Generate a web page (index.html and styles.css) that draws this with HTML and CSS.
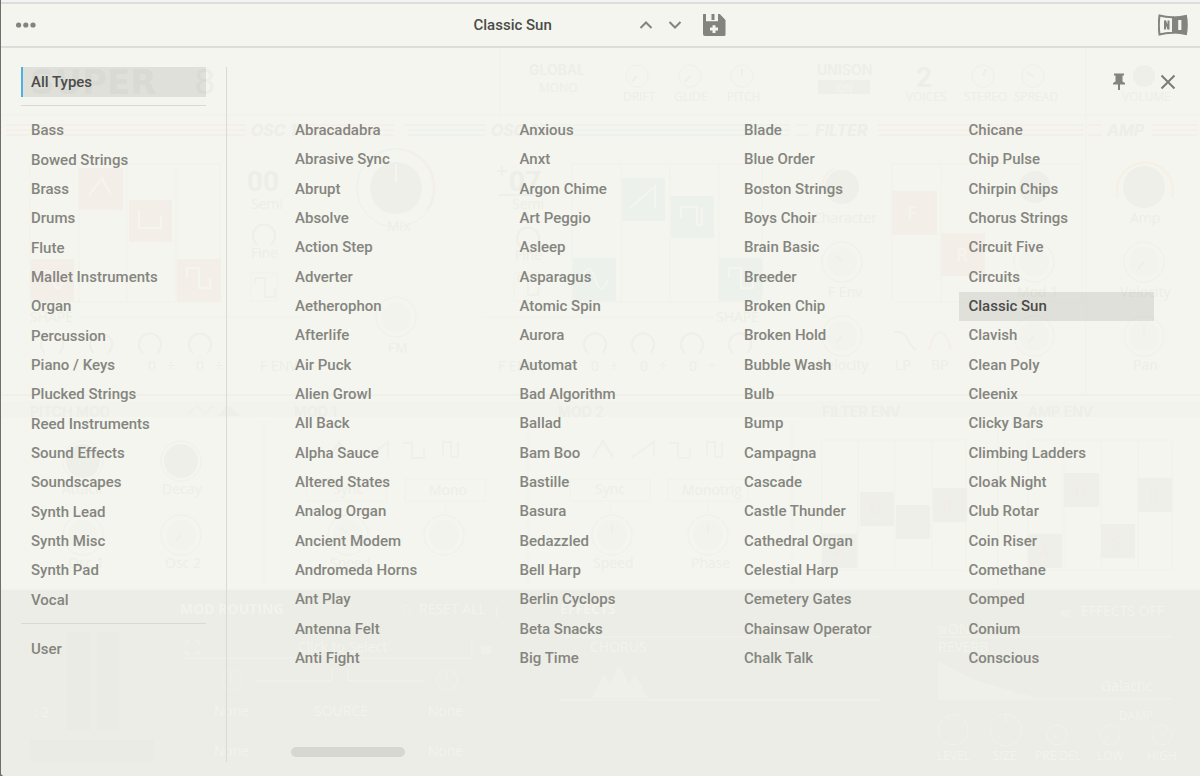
FILE: index.html
```html
<!DOCTYPE html>
<html lang="en">
<head>
<meta charset="utf-8">
<meta name="viewport" content="width=device-width, initial-scale=1">
<title>Classic Sun</title>
<link rel="stylesheet" href="styles.css">
</head>
<body>
<div class="window">
  <svg class="backdrop" width="1200" height="776" viewBox="0 0 1200 776" aria-hidden="true">
    <defs>
      <g id="knob"><circle r="20" class="outline"/><circle r="15" class="cap"/></g>
      <g id="dial"><circle r="11" class="outline"/></g>
      <path id="arc" d="M-7 9a11 11 0 1 1 14 0" class="arc"/>
      <path id="square" d="M-10 -4v-6h10v19h10v-8" class="wave"/>
    </defs>
    <rect y="590" width="1200" height="186" class="lower"/>
    <path d="M2 115h1198M500 47v68M1086 47v348" class="hair"/>
    <g class="title"><text x="30" y="94">SUPER</text><text x="194" y="94" class="thin">8</text></g>
    <g class="pink-line"><path d="M6 125h240M6 130h240M6 135h240M302 125h92M302 130h92M302 135h92M795 125h14M795 135h14M878 125h206M878 130h206M878 135h206M1088 125h14M1088 135h14M1152 125h46M1152 130h46M1152 135h46"/></g>
    <g class="blue-line"><path d="M404 125h82M408 130h78M408 135h78M540 125h250M540 130h250M540 135h250"/></g>
    <g class="heading slant"><text x="251" y="136">OSC 1</text><text x="491" y="136">OSC 2</text><text x="815" y="136">FILTER</text><text x="1107" y="136">AMP</text></g>
    <g class="label"><text x="529" y="75">GLOBAL</text><text x="817" y="75">UNISON</text></g>
    <g class="small"><text x="539" y="92">MONO</text><text x="623" y="101">DRIFT</text><text x="674" y="101">GLIDE</text><text x="727" y="101">PITCH</text><text x="906" y="101">VOICES</text><text x="964" y="101">STEREO</text><text x="1014" y="101">SPREAD</text><text x="1122" y="101">VOLUME</text></g>
    <rect x="818" y="80" width="52" height="14" class="fill"/><text x="836" y="92" class="cut">ON</text>
    <text x="916" y="87" class="number">2</text>
    <use href="#dial" x="637" y="76"/><use href="#dial" x="690" y="76"/><use href="#dial" x="742" y="76"/><use href="#dial" x="983" y="76"/><use href="#dial" x="1033" y="76"/>
    <path d="M637 76l-5 6M690 76l-5 6M742 76v-7M983 76l3-7M1033 76l-6-3" class="arc"/>
    <circle cx="1144" cy="76" r="11" class="fill"/>
    <path d="M30 164h190v138H30zM79 164v138M127 164v138M176 164v138M572 164h190v138H572zM621 164v138M670 164v138M719 164v138M892 164h190v138H892zM941 164v138" class="hair"/>
    <g class="pink"><rect x="79" y="168" width="44" height="42"/><rect x="129" y="200" width="43" height="42"/><rect x="31" y="259" width="43" height="43"/><rect x="177" y="259" width="44" height="43"/><rect x="892" y="191" width="45" height="44"/><rect x="941" y="233" width="44" height="43"/></g>
    <g class="blue"><rect x="622" y="178" width="43" height="43"/><rect x="671" y="196" width="43" height="42"/><rect x="573" y="258" width="43" height="43"/><rect x="719" y="258" width="43" height="43"/></g>
    <g class="cut-line"><path d="M89 195l13-17 9 17M139 210v18h22v-12M187 278v-10h12v20h11v-10M40 279q6-18 12 0t12 0M630 208l25-22v22M681 218v-11h16v18h5v-18M582 279q7-20 13 0t13 0M729 278v-10h12v20h12v-10"/></g>
    <text x="907" y="220" class="cut-big">F</text><text x="956" y="262" class="cut-big">R</text>
    <g class="number"><text x="247" y="191">00</text><text x="509" y="191">07</text></g>
    <path d="M497 171h10M502 166v10M498 195h40" class="arc"/>
    <g class="caption"><text x="251" y="209">Semi</text><text x="251" y="258">Fine</text><text x="512" y="209">Semi</text><text x="515" y="260">Fine</text><text x="387" y="231">Mix</text><text x="388" y="353">FM</text><text x="813" y="223">Character</text><text x="828" y="297">F Env</text><text x="818" y="370">Velocity</text><text x="1130" y="223">Amp</text><text x="1120" y="297">Velocity</text><text x="1133" y="370">Pan</text><text x="1017" y="297">Mod 1</text><text x="895" y="370">LP</text><text x="931" y="370">BP</text><text x="62" y="494">Attack</text><text x="162" y="494">Decay</text><text x="68" y="568">Osc 1</text><text x="165" y="568">Osc 2</text><text x="333" y="494">Sync</text><text x="429" y="495">Mono</text><text x="595" y="494">Sync</text><text x="682" y="495">Monotrig</text><text x="330" y="568">Speed</text><text x="593" y="568">Speed</text><text x="691" y="568">Phase</text><text x="30" y="322">SHAPE</text><text x="716" y="322">SHAPE</text><text x="260" y="371">F ENV</text><text x="498" y="371">F ENV</text><text x="148" y="371">0 &#160; ÷</text><text x="196" y="371">0 &#160; ÷</text><text x="591" y="371">0 &#160; ÷</text><text x="640" y="371">0 &#160; ÷</text><text x="689" y="371">0 &#160; ÷</text></g>
    <circle cx="396" cy="188" r="39" class="outline"/><circle cx="396" cy="188" r="26" class="fill"/><path d="M396 164v18" class="cut-line"/>
    <path d="M364 165a39 39 0 0 1 32-16" class="blue-line"/><path d="M400 149a39 39 0 0 1 26 62" class="pink-line"/>
    <circle cx="1144" cy="187" r="21" class="fill"/><path d="M1118 198a28 28 0 1 1 54 0" class="yellow-line"/>
    <circle cx="842" cy="187" r="17" class="fill"/><path d="M822 187a20 20 0 0 1 12-18" class="pink-line"/><circle cx="1035" cy="187" r="16" class="fill"/>
    <use href="#knob" x="396" y="317"/><use href="#knob" x="842" y="262"/><use href="#knob" x="842" y="336"/><use href="#knob" x="1034" y="262"/><use href="#knob" x="1034" y="336"/><use href="#knob" x="1144" y="262"/><use href="#knob" x="1144" y="336"/>
    <path d="M842 336l-6 7M1034 336l-6 7M1144 262l-6 7M1144 334v-8M842 262l-6-6" class="arc"/>
    <use href="#arc" x="264" y="235"/><use href="#arc" x="528" y="238"/><use href="#arc" x="52" y="344"/><use href="#arc" x="101" y="344"/><use href="#arc" x="150" y="344"/><use href="#arc" x="200" y="344"/><use href="#arc" x="595" y="344"/><use href="#arc" x="643" y="344"/><use href="#arc" x="692" y="344"/><use href="#arc" x="740" y="344"/>
    <path d="M251 273h26v28h-26zM514 273h26v28h-26z" class="hair"/><use href="#square" x="265" y="288"/><use href="#square" x="528" y="286"/>
    <path d="M80 317h228M484 317h230" class="hair"/>
    <path d="M894 332c16-2 12 12 22 18" class="arc"/><path d="M929 350c6-24 16-24 22 0" class="pink-line"/>
    <path d="M2 395h1198" class="rule"/><rect x="2" y="401" width="1198" height="16" class="faint"/>
    <g class="label"><text x="30" y="417">PITCH MOD</text><text x="294" y="417">MOD 1</text><text x="558" y="417">MOD 2</text><text x="822" y="417">FILTER ENV</text><text x="1028" y="417">AMP ENV</text></g>
    <path d="M187 415l10-9 8 8 8-9" class="wave"/><path d="M214 416c8 0 9-10 14-10s7 10 16 10z" class="fill"/>
    <path d="M264 421v164M528 421v164M792 421v164M998 421v164M822 440h144v130H822zM858 440v130M895 440v130M932 440v130M1028 440h144v130h-144zM1064 440v130M1101 440v130M1138 440v130" class="hair"/>
    <use href="#knob" x="83" y="461"/><use href="#knob" x="181" y="461"/><circle cx="83" cy="461" r="17" class="fill"/><circle cx="181" cy="461" r="17" class="fill"/>
    <use href="#knob" x="83" y="535"/><use href="#knob" x="181" y="535"/><use href="#knob" x="348" y="535"/><use href="#knob" x="444" y="535"/><use href="#knob" x="612" y="535"/><use href="#knob" x="708" y="535"/>
    <path d="M181 535l-5 6M348 533l-8-5M612 533v-9M708 533v-9M593 457l10-16 10 16M330 457l9-15 9 15" class="arc"/>
    <path d="M632 457l22-15v15M368 457l20-15v15M443 457v-15h8v15h7v-15M707 457v-15h8v15h7v-15M403 443h9v15h12v-9M669 443h9v15h12v-9" class="wave"/>
    <path d="M307 479h80v22h-80zM405 479h80v22h-80zM570 479h80v22h-80zM668 479h80v22h-80zM348 501v13M445 501v13M611 501v13M708 501v13" class="hair"/>
    <g class="fill"><rect x="822" y="534" width="35" height="34"/><rect x="860" y="492" width="34" height="34"/><rect x="896" y="505" width="34" height="34"/><rect x="933" y="488" width="34" height="34"/><rect x="1028" y="534" width="34" height="34"/><rect x="1064" y="473" width="35" height="34"/><rect x="1101" y="524" width="34" height="34"/><rect x="1138" y="478" width="34" height="34"/></g>
    <g class="stage"><text x="833" y="557">A</text><text x="870" y="515">D</text><text x="907" y="529">S</text><text x="943" y="512">R</text><text x="1039" y="557">A</text><text x="1075" y="497">D</text><text x="1112" y="548">S</text><text x="1149" y="502">R</text></g>
    <g class="light-text"><text x="180" y="614" class="bold">MOD ROUTING</text><text x="419" y="614">RESET ALL</text><text x="560" y="614" class="bold">EFFECTS</text><text x="1081" y="616">EFFECTS OFF</text><text x="948" y="634">ON</text><text x="938" y="652">REVERB</text><text x="590" y="652">CHORUS</text><text x="298" y="652">Click to Select</text><text x="214" y="716">None</text><text x="314" y="716">SOURCE</text><text x="428" y="716">None</text><text x="214" y="756">None</text><text x="428" y="756">None</text><text x="34" y="717">: 2</text><text x="1101" y="691">Galactic</text></g>
    <g class="light-small"><text x="937" y="760">LEVEL</text><text x="993" y="760">SIZE</text><text x="1035" y="760">PRE DEL</text><text x="1097" y="760">LOW</text><text x="1147" y="760">HIGH</text><text x="1119" y="720">DAMP</text></g>
    <g class="light-line"><path d="M560 637h320M938 637h234M560 700h320M938 699h234M186 658h286v-18M256 681h76v-12M424 681h-76v-12M186 645v-4h4M195 641h4v4M199 650v4h-4M190 654h-4v-4M408 613a4 4 0 1 0-3 0M497 606v12M231 672v9M447 672v8M951 723l-4-8M1006 723v-9M1057 735l-6 6M1110 735l-6 6M1162 735l6-6"/><circle cx="232" cy="680" r="10"/><circle cx="447" cy="680" r="10"/><circle cx="953" cy="730" r="15"/><circle cx="1006" cy="730" r="16"/><circle cx="1057" cy="735" r="10"/><circle cx="1110" cy="735" r="10"/><circle cx="1162" cy="735" r="10"/></g>
    <g class="light-fill"><path d="M938 661l36 19 66 19H938zM592 698l12-24 6 10 9-19 10 20 6-10 13 23z"/><rect x="1061" y="610" width="9" height="7"/><rect x="938" y="626" width="8" height="8"/><rect x="481" y="646" width="10" height="8"/><rect x="70" y="678" width="16" height="4"/></g>
    <path d="M67 632h24v98H67zM98 632h20v98H98zM30 740h124v22H30z" class="shade"/><path d="M528 592v184" class="shade-line"/>
  </svg>

  <header class="toolbar">
    <div class="toolbar-side">
      <button class="icon-button" type="button" aria-label="Menu"><svg width="20" height="8" viewBox="0 0 20 8"><circle cx="2.6" cy="4" r="2.6"/><circle cx="9.8" cy="4" r="2.6"/><circle cx="17" cy="4" r="2.6"/></svg></button>
    </div>
    <div class="preset-bar">
      <button class="preset-name" type="button">Classic Sun</button>
      <button class="icon-button" type="button" aria-label="Previous preset"><svg width="14" height="10" viewBox="0 0 14 10"><path d="M1.500 8L7 2.500 12.500 8" class="chevron"/></svg></button>
      <button class="icon-button" type="button" aria-label="Next preset"><svg width="14" height="10" viewBox="0 0 14 10"><path d="M1.500 2L7 7.500 12.500 2" class="chevron"/></svg></button>
      <button class="icon-button save" type="button" aria-label="Save preset"><svg width="24" height="24" viewBox="0 0 24 24"><path fill-rule="evenodd" d="M1.500 1H4v7.200h12V1h1.800L23.500 7v14.500Q23.500 23 22 23H3Q1 23 1 21V1.500zM10.500 12.200v2.300H8v3h2.500V20h3v-2.500H16v-3h-2.500v-2.300z"/><path d="M9.500 1h3v6h-3z"/></svg></button>
    </div>
    <div class="toolbar-side toolbar-end">
      <button class="icon-button" type="button" aria-label="NI"><svg width="30" height="22" viewBox="0 0 30 22"><path d="M1.500 1.500Q8 3.300 15 3.200v15.600Q8 18.700 1.500 20.500Q.2 11 1.500 1.500z" class="logo-page"/><path d="M15 2.500Q22 2.500 28.800.8Q30.800 11 28.800 21.200Q22 19.500 15 19.500z"/><path d="M7 15.500V6.500L10.500 15.500V6.500" class="logo-n"/><path d="M20.200 6h3.200v10h-3.200z" class="logo-i"/></svg></button>
    </div>
  </header>

  <main class="browser">
    <nav class="types" aria-label="Types">
      <button class="item all" type="button" aria-pressed="true">All Types</button>
      <hr class="separator">
      <ul class="list type-list">
        <li><button class="item" type="button">Bass</button></li>
        <li><button class="item" type="button">Bowed Strings</button></li>
        <li><button class="item" type="button">Brass</button></li>
        <li><button class="item" type="button">Drums</button></li>
        <li><button class="item" type="button">Flute</button></li>
        <li><button class="item" type="button">Mallet Instruments</button></li>
        <li><button class="item" type="button">Organ</button></li>
        <li><button class="item" type="button">Percussion</button></li>
        <li><button class="item" type="button">Piano / Keys</button></li>
        <li><button class="item" type="button">Plucked Strings</button></li>
        <li><button class="item" type="button">Reed Instruments</button></li>
        <li><button class="item" type="button">Sound Effects</button></li>
        <li><button class="item" type="button">Soundscapes</button></li>
        <li><button class="item" type="button">Synth Lead</button></li>
        <li><button class="item" type="button">Synth Misc</button></li>
        <li><button class="item" type="button">Synth Pad</button></li>
        <li><button class="item" type="button">Vocal</button></li>
      </ul>
      <hr class="separator">
      <button class="item" type="button">User</button>
    </nav>

    <section class="presets" aria-label="Presets">
      <div class="actions">
        <button class="icon-button" type="button" aria-label="Pin browser"><svg width="14" height="18" viewBox="0 0 14 18"><path d="M2 .5h10v2h-1.500v6L13 10v1.500H8V17H6v-5.500H1V10l2.500-1.500v-6H2z"/></svg></button>
        <button class="icon-button" type="button" aria-label="Close browser"><svg width="16" height="16" viewBox="0 0 16 16"><path d="M1.500 1.500l13 13M14.500 1.500l-13 13" class="cross"/></svg></button>
      </div>
      <div class="columns">
        <ul class="list">
          <li><button class="item" type="button">Abracadabra</button></li>
          <li><button class="item" type="button">Abrasive Sync</button></li>
          <li><button class="item" type="button">Abrupt</button></li>
          <li><button class="item" type="button">Absolve</button></li>
          <li><button class="item" type="button">Action Step</button></li>
          <li><button class="item" type="button">Adverter</button></li>
          <li><button class="item" type="button">Aetherophon</button></li>
          <li><button class="item" type="button">Afterlife</button></li>
          <li><button class="item" type="button">Air Puck</button></li>
          <li><button class="item" type="button">Alien Growl</button></li>
          <li><button class="item" type="button">All Back</button></li>
          <li><button class="item" type="button">Alpha Sauce</button></li>
          <li><button class="item" type="button">Altered States</button></li>
          <li><button class="item" type="button">Analog Organ</button></li>
          <li><button class="item" type="button">Ancient Modem</button></li>
          <li><button class="item" type="button">Andromeda Horns</button></li>
          <li><button class="item" type="button">Ant Play</button></li>
          <li><button class="item" type="button">Antenna Felt</button></li>
          <li><button class="item" type="button">Anti Fight</button></li>
        </ul>
        <ul class="list">
          <li><button class="item" type="button">Anxious</button></li>
          <li><button class="item" type="button">Anxt</button></li>
          <li><button class="item" type="button">Argon Chime</button></li>
          <li><button class="item" type="button">Art Peggio</button></li>
          <li><button class="item" type="button">Asleep</button></li>
          <li><button class="item" type="button">Asparagus</button></li>
          <li><button class="item" type="button">Atomic Spin</button></li>
          <li><button class="item" type="button">Aurora</button></li>
          <li><button class="item" type="button">Automat</button></li>
          <li><button class="item" type="button">Bad Algorithm</button></li>
          <li><button class="item" type="button">Ballad</button></li>
          <li><button class="item" type="button">Bam Boo</button></li>
          <li><button class="item" type="button">Bastille</button></li>
          <li><button class="item" type="button">Basura</button></li>
          <li><button class="item" type="button">Bedazzled</button></li>
          <li><button class="item" type="button">Bell Harp</button></li>
          <li><button class="item" type="button">Berlin Cyclops</button></li>
          <li><button class="item" type="button">Beta Snacks</button></li>
          <li><button class="item" type="button">Big Time</button></li>
        </ul>
        <ul class="list">
          <li><button class="item" type="button">Blade</button></li>
          <li><button class="item" type="button">Blue Order</button></li>
          <li><button class="item" type="button">Boston Strings</button></li>
          <li><button class="item" type="button">Boys Choir</button></li>
          <li><button class="item" type="button">Brain Basic</button></li>
          <li><button class="item" type="button">Breeder</button></li>
          <li><button class="item" type="button">Broken Chip</button></li>
          <li><button class="item" type="button">Broken Hold</button></li>
          <li><button class="item" type="button">Bubble Wash</button></li>
          <li><button class="item" type="button">Bulb</button></li>
          <li><button class="item" type="button">Bump</button></li>
          <li><button class="item" type="button">Campagna</button></li>
          <li><button class="item" type="button">Cascade</button></li>
          <li><button class="item" type="button">Castle Thunder</button></li>
          <li><button class="item" type="button">Cathedral Organ</button></li>
          <li><button class="item" type="button">Celestial Harp</button></li>
          <li><button class="item" type="button">Cemetery Gates</button></li>
          <li><button class="item" type="button">Chainsaw Operator</button></li>
          <li><button class="item" type="button">Chalk Talk</button></li>
        </ul>
        <ul class="list">
          <li><button class="item" type="button">Chicane</button></li>
          <li><button class="item" type="button">Chip Pulse</button></li>
          <li><button class="item" type="button">Chirpin Chips</button></li>
          <li><button class="item" type="button">Chorus Strings</button></li>
          <li><button class="item" type="button">Circuit Five</button></li>
          <li><button class="item" type="button">Circuits</button></li>
          <li><button class="item" type="button" aria-pressed="true">Classic Sun</button></li>
          <li><button class="item" type="button">Clavish</button></li>
          <li><button class="item" type="button">Clean Poly</button></li>
          <li><button class="item" type="button">Cleenix</button></li>
          <li><button class="item" type="button">Clicky Bars</button></li>
          <li><button class="item" type="button">Climbing Ladders</button></li>
          <li><button class="item" type="button">Cloak Night</button></li>
          <li><button class="item" type="button">Club Rotar</button></li>
          <li><button class="item" type="button">Coin Riser</button></li>
          <li><button class="item" type="button">Comethane</button></li>
          <li><button class="item" type="button">Comped</button></li>
          <li><button class="item" type="button">Conium</button></li>
          <li><button class="item" type="button">Conscious</button></li>
        </ul>
      </div>
      <div class="scroll-track"><div class="scroll-thumb"></div></div>
    </section>
  </main>
</div>
</body>
</html>
```

FILE: styles.css
```css
* { box-sizing: border-box; }

body {
  margin: 0;
  background: #6e6e6c;
  color: #858580;
  font-family: Roboto, "Liberation Sans", sans-serif;
  font-size: 15px;
  font-weight: 500;
}

button {
  margin: 0;
  padding: 0;
  border: 0;
  background: none;
  color: inherit;
  font: inherit;
  cursor: pointer;
}

.window {
  position: relative;
  display: flex;
  flex-direction: column;
  min-height: 100vh;
  margin-left: 1px;
  overflow: hidden;
  background: linear-gradient(#f4f5ee 588px, #ecede6 592px);
  border-bottom-left-radius: 4px;
}

/* Dimmed instrument panel behind the browser */
.backdrop {
  position: absolute;
  top: 0;
  left: -1px;
  font-family: "Open Sans", sans-serif;
  font-size: 14px;
  font-weight: 400;
}
.backdrop text { fill: #edeee7; }
.lower { fill: #ecede6; }
.hair { fill: none; stroke: #f1f2eb; }
.rule { stroke: #eaebe4; }
.faint { fill: #f2f3ec; }
.outline { fill: none; stroke: #eff0e9; }
.cap { fill: #f2f3ec; }
.fill { fill: #eeefe8; }
.arc { fill: none; stroke: #eeefe8; stroke-width: 2; }
.wave { fill: none; stroke: #eff0e9; stroke-width: 2; }
.shade { fill: #eaebe4; }
.shade-line { stroke: #eeefe8; }
.pink { fill: #f4eee8; }
.blue { fill: #ecf1ec; }
.pink-line { fill: none; stroke: #f4efe8; stroke-width: 2; }
.blue-line { fill: none; stroke: #eef2ed; stroke-width: 2; }
.yellow-line { fill: none; stroke: #f5f0e3; stroke-width: 2; }
.cut-line { fill: none; stroke: #f5f5ef; stroke-width: 2; }
.title { font: 700 34px "DejaVu Sans", sans-serif; }
.title .thin { font-weight: 400; }
.heading { font: 700 16px Inter, sans-serif; }
.slant { font-style: italic; }
.label { font: 600 14px Inter, sans-serif; }
.small { font-size: 12px; }
.number { font: 700 28px Roboto, sans-serif; }
.backdrop .cut { fill: #f4f5ee; font-size: 11px; }
.backdrop .cut-big { fill: #f4f4ee; font-size: 19px; font-weight: 600; }
.backdrop .stage text { fill: #f2ece5; font-size: 16px; }
.backdrop .light-text text { fill: #f2f3ed; font-size: 14px; }
.backdrop .light-text .bold { font-weight: 700; }
.backdrop .light-small text { fill: #f2f3ed; font-size: 12px; }
.light-line { fill: none; stroke: #f1f2ec; stroke-width: 1; }
.light-fill { fill: #f0f0ea; }

/* Toolbar */
.toolbar {
  position: relative;
  display: flex;
  align-items: center;
  height: 48px;
  padding: 1px 12px 0 15px;
  background: #f4f5ee;
  border-top: 2px solid #f3f3f3;
  border-bottom: 2px solid #dddeda;
  box-shadow: inset 0 2px #dddeda;
}
.toolbar-side {
  display: flex;
  flex: 1;
}
.toolbar-end { justify-content: flex-end; }
.preset-bar {
  display: flex;
  align-items: center;
  gap: 15px;
  margin-right: 5px;
}
.preset-name {
  width: 150px;
  color: #4b4b49;
  text-align: left;
}
.save { margin-left: 5px; }
.icon-button { display: flex; }
.icon-button svg { fill: #84847f; }
.icon-button .chevron {
  fill: none;
  stroke: #84847f;
  stroke-width: 2;
}
.icon-button .logo-page {
  fill: none;
  stroke: #84847f;
  stroke-width: 2;
}
.icon-button .logo-n {
  fill: none;
  stroke: #84847f;
  stroke-width: 2;
}
.icon-button .logo-i { fill: #f4f5ee; }
.icon-button .cross {
  fill: none;
  stroke: #7c7c77;
  stroke-width: 2;
}

/* Preset browser */
.browser {
  position: relative;
  display: flex;
  flex: 1;
  padding: 19px 46px 14px 20px;
}
.types {
  flex: none;
  width: 206px;
  padding-right: 20px;
  border-right: 1px solid #d9dad5;
}
.list {
  display: grid;
  grid-auto-rows: 1fr;
  margin: 0;
  padding: 0;
  list-style: none;
}
.type-list { height: 499px; }
.item {
  display: block;
  width: 100%;
  height: 100%;
  padding: 0 10px;
  line-height: 29px;
  text-align: left;
  white-space: nowrap;
}
.types > .item { height: 30px; }
.item[aria-pressed="true"] {
  background: rgba(20, 20, 20, 0.09);
  color: #4b4b49;
}
.item.all {
  padding-left: 8px;
  border-left: 2px solid #4eb0e0;
}
.separator {
  height: 1px;
  margin: 8px 0 10px;
  border: 0;
  background: #d9dad5;
}
.presets {
  display: flex;
  flex: 1;
  flex-direction: column;
  min-width: 0;
  padding-left: 58px;
}
.actions {
  display: flex;
  align-items: center;
  justify-content: flex-end;
  gap: 34px;
  height: 30px;
  margin-right: -22px;
}
.columns {
  display: grid;
  grid-template-columns: repeat(4, 1fr);
  gap: 29px;
  height: 557px;
  margin-top: 19px;
}
.scroll-track {
  margin-top: auto;
  padding: 0 6px 5px;
}
.scroll-thumb {
  width: 114px;
  height: 10px;
  border-radius: 5px;
  background: #d7d7d1;
}
```
